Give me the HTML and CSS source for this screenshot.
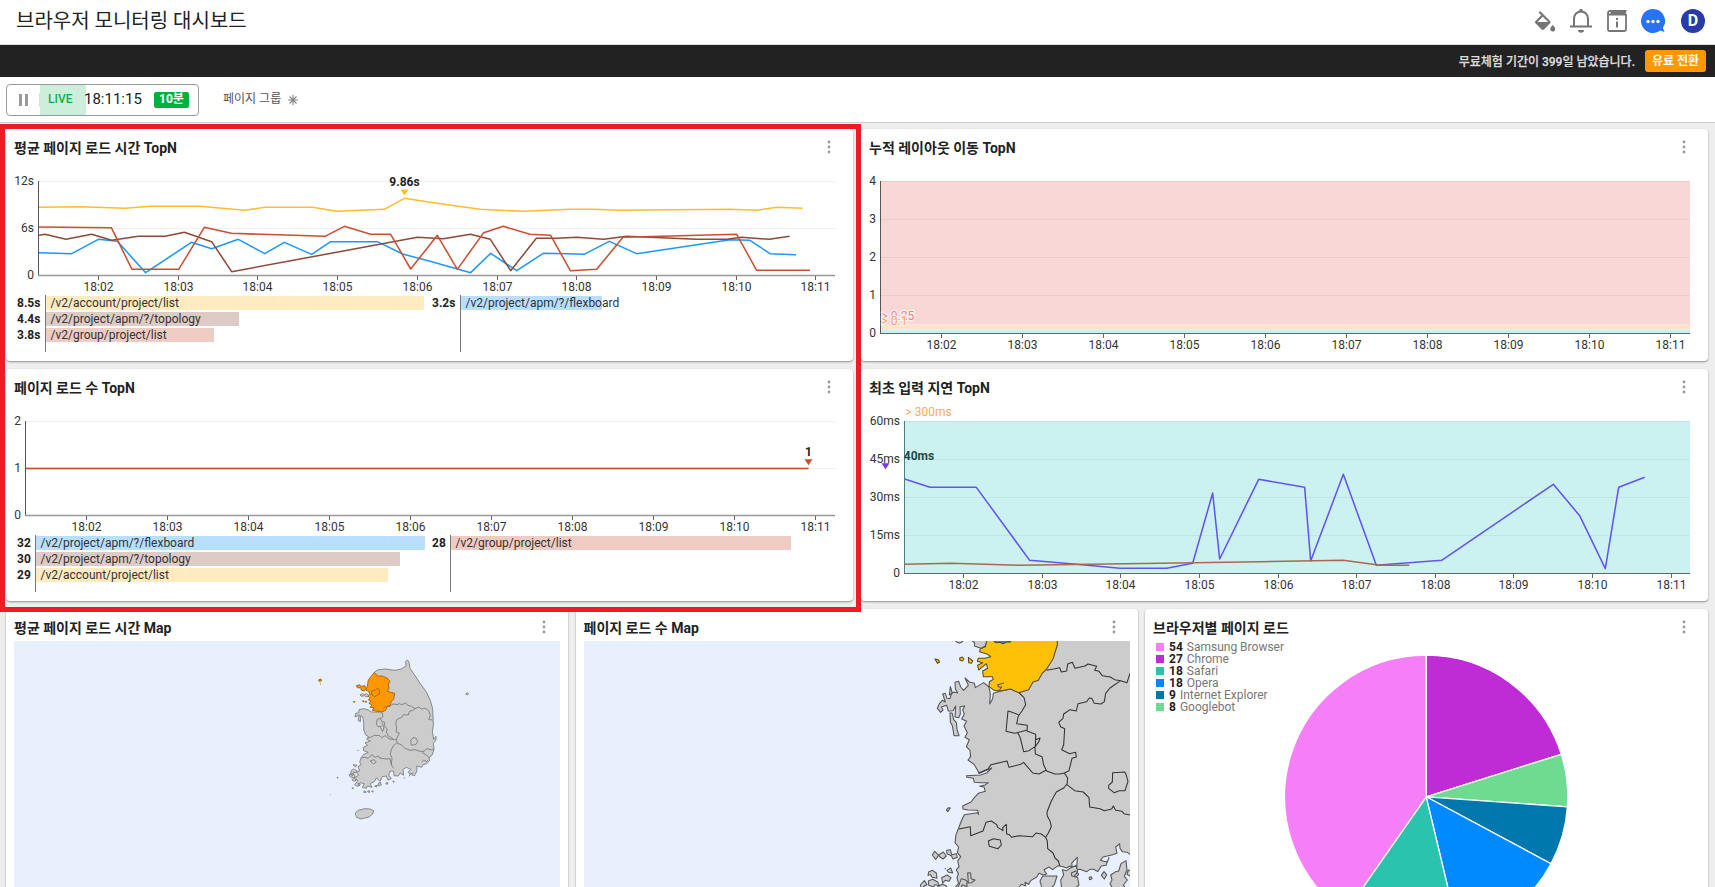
FILE: index.html
```html
<!DOCTYPE html>
<html lang="ko">
<head>
<meta charset="utf-8">
<title>브라우저 모니터링 대시보드</title>
<link rel="stylesheet" href="styles.css">
</head>
<body>
<svg class="defs" width="0" height="0"><symbol id="more" viewBox="0 0 4 14"><g fill="#999"><circle cx="2" cy="2" r="1.400"/><circle cx="2" cy="7" r="1.400"/><circle cx="2" cy="12" r="1.400"/></g></symbol></svg>
<header class="topbar">
  <h1 class="page-title">브라우저 모니터링 대시보드</h1>
  <div class="actions">
    <svg class="ic-fill" width="20" height="24" viewBox="3 -1 18 20" fill="#757575"><path d="M16.560 8.940L7.620 0 6.210 1.410l2.380 2.380-5.150 5.150c-.59.59-.59 1.540 0 2.120l5.500 5.500c.29.29.68.44 1.060.44s.77-.15 1.060-.44l5.500-5.500c.59-.58.59-1.530 0-2.120zM5.210 10L10 5.210 14.790 10H5.210zM19 12.600s-2.300 2.170-2.300 3.600c0 1.200 1 2.200 2.300 2.200s2.300-1 2.300-2.200c0-1.430-2.300-3.600-2.300-3.600z"/></svg>
    <svg class="ic-bell" width="22" height="24" viewBox="0 0 22 24"><path d="M4 17V9.500a7 7 0 0 1 14 0V17M0 17.500h22" fill="none" stroke="#757575" stroke-width="2"/><circle cx="11" cy="1.600" r="1.700" fill="#757575"/><path d="M8 21h6a3 2.800 0 0 1-6 0z" fill="#757575"/></svg>
    <svg class="ic-book" width="20" height="24" viewBox="0 0 20 24" fill="none" stroke="#757575" stroke-width="1.800"><path d="M19.500 2H2.800a1.800 1.800 0 0 0 0 3.600H19V20.500a1.500 1.500 0 0 1-1.500 1.500h-15A1.500 1.500 0 0 1 1 20.500V3.600M3.500 3.800H18v2"/><path d="M10 9v2M10 12.500v6" stroke-width="2"/></svg>
    <svg class="ic-chat" width="24" height="24" viewBox="0 0 24 24"><path d="M12 0a12 12 0 1 0 7.200 21.600L23.500 23l-1.600-4.200A12 12 0 0 0 12 0z" fill="#2872f5"/><g fill="#fff"><circle cx="7" cy="12.500" r="1.700"/><circle cx="12" cy="12.500" r="1.700"/><circle cx="17" cy="12.500" r="1.700"/></g></svg>
    <span class="avatar">D</span>
  </div>
</header>
<div class="trial"><span>무료체험 기간이 399일 남았습니다.</span><button class="upgrade">유료 전환</button></div>
<div class="toolbar">
  <div class="live-box"><i class="pause"></i><i class="sep"></i><span class="live">LIVE</span><span class="clock">18:11:15</span><span class="range">10분</span></div>
  <span class="group-label">페이지 그룹</span>
  <svg class="star" width="10" height="10" viewBox="-5 -5 10 10" stroke="#888" stroke-width="1.200"><path d="M0-5V5M-5 0H5M-3.500-3.500 3.500 3.500M3.500-3.500-3.500 3.500"/></svg>
</div>
<main class="board">
  <div class="row row-wide">
    <section class="card">
      <div class="card-head"><h2>평균 페이지 로드 시간 TopN</h2><svg class="more"><use href="#more"/></svg></div>
      <svg class="chart" width="831" height="134" viewBox="14 161 831 134">
        <path class="grid" d="M39 181.500H835M39 228.500H835"/>
        <path class="axis-y" d="M38.500 181V275"/><path class="axis-x" d="M38 275.500H835"/>
        <path class="tick" d="M98.500 276v4M178.500 276v4M257.500 276v4M337.500 276v4M417.500 276v4M497.500 276v4M576.500 276v4M656.500 276v4M736.500 276v4M815.500 276v4"/>
        <g class="lab end"><text x="34" y="185">12s</text><text x="34" y="232">6s</text><text x="34" y="279">0</text></g>
        <g class="lab mid"><text x="98.500" y="291">18:02</text><text x="178.500" y="291">18:03</text><text x="257.500" y="291">18:04</text><text x="337.500" y="291">18:05</text><text x="417.500" y="291">18:06</text><text x="497.500" y="291">18:07</text><text x="576.500" y="291">18:08</text><text x="656.500" y="291">18:09</text><text x="736.500" y="291">18:10</text><text x="815.500" y="291">18:11</text></g>
        <g class="series" transform="translate(0 120) scale(.33333)">
          <polyline stroke="#1e96ff" points="117,398 215,401 295,358 352,364 437,458 520,403 574,367 635,386 715,358 794,401 853,367 935,403 992,365 1132,365 1208,402 1290,424 1412,458 1472,400 1550,452 1630,400 1700,401 1752,403 1828,364 1910,401 2190,359 2250,361 2310,401 2388,404"/>
          <polyline stroke="#8d4a38" points="117,346 135,343 198,358 275,343 335,361 415,349 495,349 553,337 635,365 695,455 1252,352 1330,356 1411,343 1471,358 1532,452 1609,355 1670,355 1730,352 1811,358 1880,349 2090,358 2180,358 2225,352 2308,358 2369,349"/>
          <polyline stroke="#c94f32" points="117,321 334,323 396,448 536,448 613,322 694,340 975,349 1033,319 1112,343 1172,343 1232,447 1312,346 1372,448 1451,338 1510,319 1590,343 1652,346 1711,452 1790,448 1869,352 2210,343 2270,451 2430,451"/>
          <polyline stroke="#ffbc2e" points="117,262 240,260 376,265 450,259 600,259 734,271 794,262 937,262 1010,274 1153,268 1213,235 1290,247 1440,268 1570,274 1710,268 1780,268 1860,271 2190,268 2270,271 2330,262 2408,265"/>
        </g>
        <path d="M400.500 189.500h8l-4 6z" fill="#ffbc2e"/><text class="peak" x="404.500" y="186">9.86s</text>
      </svg>
      <div class="legend decimals">
        <ul><li><b>8.5s</b><span class="bar yellow" style="width:378px">/v2/account/project/list</span></li><li><b>4.4s</b><span class="bar brown" style="width:193px">/v2/project/apm/?/topology</span></li><li><b>3.8s</b><span class="bar red" style="width:168px">/v2/group/project/list</span></li></ul>
        <ul><li><b>3.2s</b><span class="bar blue" style="width:141px">/v2/project/apm/?/flexboard</span></li></ul>
      </div>
    </section>
    <section class="card">
      <div class="card-head"><h2>누적 레이아웃 이동 TopN</h2><svg class="more"><use href="#more"/></svg></div>
      <svg class="chart" width="831" height="195" viewBox="869 161 831 195">
        <path class="axis-y" d="M880.500 181V333"/>
        <path fill="#f8d7d6" d="M881 181h809v143.500H881z"/><path fill="#ffe3c8" d="M881 324.500h809v5H881z"/><path fill="#c8f1ef" d="M881 329.500h809v4H881z"/>
        <path class="grid-dark" d="M881 181.500h809M881 219.500h809M881 257.500h809M881 295.500h809"/>
        <path class="tick" d="M880 333.500H1690M941.500 334v4M1022.500 334v4M1103.500 334v4M1184.500 334v4M1265.500 334v4M1346.500 334v4M1427.500 334v4M1508.500 334v4M1589.500 334v4M1670.500 334v4"/>
        <g class="lab end"><text x="876" y="185">4</text><text x="876" y="223">3</text><text x="876" y="261">2</text><text x="876" y="299">1</text><text x="876" y="337">0</text></g>
        <g class="lab mid"><text x="941.500" y="348.500">18:02</text><text x="1022.500" y="348.500">18:03</text><text x="1103.500" y="348.500">18:04</text><text x="1184.500" y="348.500">18:05</text><text x="1265.500" y="348.500">18:06</text><text x="1346.500" y="348.500">18:07</text><text x="1427.500" y="348.500">18:08</text><text x="1508.500" y="348.500">18:09</text><text x="1589.500" y="348.500">18:10</text><text x="1670.500" y="348.500">18:11</text></g>
        <text class="halo" x="881.500" y="320" fill="#ef7f7f">&gt; 0.25</text><text class="halo" x="881.500" y="324.500" fill="#ff9f4a">&gt; 0.1</text>
      </svg>
    </section>
    <section class="card">
      <div class="card-head"><h2>페이지 로드 수 TopN</h2><svg class="more"><use href="#more"/></svg></div>
      <svg class="chart" width="831" height="134" viewBox="14 401 831 134">
        <path class="grid" d="M26 421.500H835M26 468.500H835"/>
        <path class="axis-y" d="M25.500 421V515"/><path class="axis-x" d="M25 515.500H835"/>
        <path class="tick" d="M86.500 516v4M167.500 516v4M248.500 516v4M329.500 516v4M410.500 516v4M491.500 516v4M572.500 516v4M653.500 516v4M734.500 516v4M815.500 516v4"/>
        <g class="lab end"><text x="21" y="425">2</text><text x="21" y="472">1</text><text x="21" y="519">0</text></g>
        <g class="lab mid"><text x="86.500" y="531">18:02</text><text x="167.500" y="531">18:03</text><text x="248.500" y="531">18:04</text><text x="329.500" y="531">18:05</text><text x="410.500" y="531">18:06</text><text x="491.500" y="531">18:07</text><text x="572.500" y="531">18:08</text><text x="653.500" y="531">18:09</text><text x="734.500" y="531">18:10</text><text x="815.500" y="531">18:11</text></g>
        <path d="M26 468.500H808.500" stroke="#f3c3a4" stroke-width="3"/><path d="M26 468.500H808.500" stroke="#c9502f" stroke-width="1.200"/>
        <path d="M804.500 459.300h8l-4 6z" fill="#c9502f"/><text class="peak" x="808.500" y="456">1</text>
      </svg>
      <div class="legend">
        <ul><li><b>32</b><span class="bar blue" style="width:389px">/v2/project/apm/?/flexboard</span></li><li><b>30</b><span class="bar brown" style="width:364px">/v2/project/apm/?/topology</span></li><li><b>29</b><span class="bar yellow" style="width:352px">/v2/account/project/list</span></li></ul>
        <ul><li><b>28</b><span class="bar red" style="width:340px">/v2/group/project/list</span></li></ul>
      </div>
    </section>
    <section class="card">
      <div class="card-head"><h2>최초 입력 지연 TopN</h2><svg class="more"><use href="#more"/></svg></div>
      <svg class="chart" width="831" height="195" viewBox="869 401 831 195">
        <path fill="#cbf2f0" d="M904 421h786v152.500H904z"/>
        <path class="grid-dark" d="M905 421.500h785M905 459.500h785M905 497.500h785M905 535.500h785"/>
        <path d="M904.500 421V573" stroke="#4e7f7d"/>
        <path class="tick" d="M904 573.500H1690M963.500 574v4M1042.500 574v4M1120.500 574v4M1199.500 574v4M1278.500 574v4M1356.500 574v4M1435.500 574v4M1513.500 574v4M1592.500 574v4M1671.500 574v4"/>
        <g class="lab end"><text x="900" y="425">60ms</text><text x="900" y="463">45ms</text><text x="900" y="501">30ms</text><text x="900" y="539">15ms</text><text x="900" y="577">0</text></g>
        <g class="lab mid"><text x="963.500" y="588.500">18:02</text><text x="1042.500" y="588.500">18:03</text><text x="1120.500" y="588.500">18:04</text><text x="1199.500" y="588.500">18:05</text><text x="1278.500" y="588.500">18:06</text><text x="1356.500" y="588.500">18:07</text><text x="1435.500" y="588.500">18:08</text><text x="1513.500" y="588.500">18:09</text><text x="1592.500" y="588.500">18:10</text><text x="1671.500" y="588.500">18:11</text></g>
        <g class="series" transform="translate(860 365) scale(.33333)">
          <polyline stroke="#6353f1" points="134,342 210,367 349,367 509,586 650,598 780,610 920,610 998,595 1058,384 1079,582 1196,343 1334,367 1352,588 1450,328 1549,601 1745,586 2080,358 2159,452 2236,611 2276,367 2354,337"/>
          <polyline stroke="#a9694f" points="134,598 275,595 480,601 900,595 1200,590 1450,586 1560,601 1648,601"/>
        </g>
        <path d="M881.500 463.300h8l-4 6z" fill="#7438ff"/><text class="peak teal" x="919" y="459.500">40ms</text><text class="limit" x="905.500" y="416">&gt; 300ms</text>
      </svg>
    </section>
  </div>
  <div class="row row-maps">
    <section class="card">
      <div class="card-head"><h2>평균 페이지 로드 시간 Map</h2><svg class="more"><use href="#more"/></svg></div>
      <svg class="map" width="546" height="260" viewBox="14 641 546 260">
        <g transform="translate(300 640) scale(.33333)" fill="#ccc" stroke="#777" stroke-width="2.500" stroke-linejoin="round">
          <path d="M223,97 232,90 255,87 285,91 304,87 318,78 317,64 322,60 327,66 330,85 343,104 361,131 379,156 391,181 398,206 400,255 397,275 401,298 408,289 408,300 400,310 402,329 396,346 387,353 389,362 380,371 370,374 365,382 350,378 351,392 344,407 334,404 324,397 332,388 319,382 309,388 311,406 300,399 295,408 282,407 281,394 271,393 266,405 274,416 264,420 259,408 247,410 240,424 229,414 223,425 211,431 216,442 202,438 199,445 187,442 193,431 181,428 173,440 164,434 173,423 166,412 176,406 169,396 179,393 174,380 184,374 179,366 184,352 193,342 205,337 191,332 190,322 203,316 195,309 211,303 200,298 206,290 198,286 191,270 191,247 188,230 182,227 181,245 174,241 178,225 165,231 167,220 176,218 177,209 191,206 205,210 215,216 245,216 250,204z"/>
          <path fill="#ff9800" stroke="#965c10" d="M223,97 233,108 246,108 261,114 270,124 265,132 267,145 262,154 284,160 281,178 274,184 270,198 261,201 257,211 245,216 228,213 217,211 222,203 210,202 216,195 207,190 213,183 205,180 211,174 204,169 210,163 205,153 198,151 202,138 205,120z"/>
          <path fill="#ff9800" stroke="#965c10" d="M214,158 218,152 227,150 233,144 238,151 239,162 230,166 224,170 216,165zM169,137l10-3 4 5 12-2 2 9-4 7-10-3 1-6-12-1zM187,183l3-1 1 4zM194,185l5-2v4zM160,184l5 1-2 3zM55,120l8-3 2 5-7 3zM60,132h3"/>
          <path d="M180,165l8-4 5 3 6-3 8 5-6 5-8-4-9 2zM167,518l8-7 19-5 17 1 10 5-3 10-11 9-24 6-13-5-4-9z"/>
          <path fill="none" d="M250,205 257,199 271,198 279,192 295,194 298,189 304,195 316,189 324,196 334,199 345,206 356,201 364,207 376,205 386,212 391,226 386,238 397,240M345,206 337,212 329,213 325,225 310,224 305,232 290,239 287,252 290,262 288,275 298,279 289,298 284,299 268,297 256,287 245,293 239,287 222,286 215,291 203,294M246,217 249,230 242,236 244,243 254,247 254,259 262,267 259,276 265,288 279,296M242,235l-10 3-3 14 5 8 11-1M246,248l6 15-4 11-7-12M289,298 292,310 304,314 315,325 330,331 345,329 360,334 371,334 381,326 395,330 402,326M290,309 280,317 274,329 271,342 276,354 274,375 282,385M184,354 194,352 205,355 215,344 225,352 235,348 239,354 259,357 270,356 274,374M332,302l7-9 10 2 4 10-6 9-13 1zM210,363l11-4 8 6-8 7zM371,333l-4 5 15 9 4 6M365,367l6-7 9 5 4-5"/>
          <path d="M159,374l12 2-5 5zM154,391l7-4 10 5-5 7-5-3-2 10-7-2zM147,404l11-3 8 6-3 7-12-3zM156,419l7-4 6 6-8 3zM174,430l7 2-3 6zM190,456l5-4 3 6zM202,454l7-2-1 6zM215,453h5l-2 4zM224,438l8-2-3 5zM234,432l7-6 3 9-9 3zM257,429l7-1-3 6zM278,424l4-1v4zM172,331h4M111,412h3l-1 3zM91,464h2M156,443l4 1-2 3zM497,162l5-4 4 3-4 4zM311,414h4M341,398l-10 4-4 7"/>
        </g>
      </svg>
    </section>
    <section class="card">
      <div class="card-head"><h2>페이지 로드 수 Map</h2><svg class="more"><use href="#more"/></svg></div>
      <svg class="map" width="546" height="260" viewBox="584 641 546 260">
        <g transform="translate(910 610) scale(.33333)" fill="#ccc" stroke="#555" stroke-width="3.200" stroke-linejoin="round">
          <path d="M330,80H700V850H132L134,834 146,820 141,804 145,791 139,779 147,770 143,753 152,740 142,728 146,711 135,698 138,674 146,654 154,633 163,614 202,608 206,613 203,601 174,600 159,597 158,588 183,576 193,563 205,550 226,544 222,531 209,529 225,525 235,518 213,518 193,517 190,505 171,502 169,497 211,495 230,489 245,474 208,490 192,463 174,450 182,440 180,421 169,410 178,389 165,382 172,368 162,347 170,334 155,327 163,313 158,299 164,288 150,290 151,312 146,323 135,321 137,288 129,302 115,303 110,286 94,291 99,300 92,307 82,295 88,281 97,271 106,276 98,252 106,250 111,265 120,266 126,246 121,230 118,255 132,246 143,249 136,236 135,217 146,214 152,231 161,241 175,226 165,204 178,216 193,220 196,233 221,218 237,231 241,253 239,282 248,266 250,250 271,244 330,230z"/>
          <path fill="#ffc107" stroke="#554b25" d="M232,85 226,110 211,116 209,125 233,133 242,140 225,145 205,145 202,154 218,158 203,166 206,180 229,161 233,175 218,183 220,200 247,200 250,208 238,215 237,230 253,241 267,244 301,237 326,248 356,239 369,216 385,211 396,191 410,177 429,147 442,105V85z"/>
          <path fill="none" d="M255,242 269,240 275,231 266,231 263,224 282,219"/>
          <path fill="#2389dc" stroke="#554b25" d="M250,90 256,98 270,97 279,101 291,95 300,97 304,90z"/>
          <path d="M184,90 194,99 193,108 213,115 225,109 231,90zM134,90q15 18 27 0zM120,308 127,310 131,329 139,337 141,358 147,377 132,377 127,347 121,336zM109,600l6-7 6 1-8 11z"/>
          <path fill="#ffc107" stroke="#554b25" d="M75,147l9 2 5 7-7 4zM149,145l8-4 5 6-5 6-7-2zM175,142l5 4 8 7-4 7-8-2z"/>
          <g fill="none" stroke="#333"><path d="M410,181 431,177 449,173 454,186 470,183 473,162 487,157 495,175 511,171 525,168 534,162 560,169 554,181 567,184 577,197 601,201 614,209 632,212 651,218 660,190M632,212 600,234 587,250 583,275 573,282 553,280 545,265 538,264 530,275 504,281 499,303 480,299 461,312 459,325 446,337 452,350 464,356 461,405 455,419 479,431 497,427 499,441 486,445 477,482 463,489 449,492 435,492 410,483 401,465 396,440 376,432 375,411 387,394 390,384 377,389 377,373 351,363 352,346 320,341 325,318 336,303 347,284 342,263 328,249M325,314 306,307 294,303 288,364 314,370 349,361M323,369 330,381 341,425 357,422 376,409 377,374M205,490 234,477 243,464 291,453 297,472 332,463 341,457 368,489 387,492 408,481M463,489 473,504 471,524 494,542 520,546 537,563 539,591 570,596 583,602 605,597 610,588 617,601 636,604 642,611 661,615M471,522 461,534 439,546 424,573 411,606 412,618 420,633 424,650 415,669 407,682 394,672 378,669 368,680 327,677 305,682 298,674 290,672 289,643 278,653 279,662 264,653 260,644 244,633 228,637 219,663 182,677 181,650 147,657M407,682 412,693 413,716 429,729 435,744 445,753 450,769"/><path fill="#ccc" d="M235,693 250,686 271,690 274,705 264,716 238,709zM608,488 644,486 648,493 654,514 645,542 628,542 612,548 596,535 596,526 607,516z"/></g>
          <path fill="#e8f0fe" d="M680,745 661,734 652,727 637,725 630,715 629,701 617,711 621,730 608,734 579,741 571,751 590,756 596,747 597,743 588,766 574,768 563,785 551,778 540,778 530,785 510,778 500,779 502,742 492,752 485,760 487,771 480,768 470,774 459,770 444,767 428,779 417,771 402,779 410,792 400,795 387,790 380,801 362,812 356,823 345,817 347,828 334,823 321,840H680z"/>
          <path d="M397,837 390,814 398,798 418,798 441,798 433,824 416,841zM456,841 452,810 461,795 457,779 470,782 480,775 499,766 503,786 492,799 503,803 507,825 488,841zM484,789l13-6 9 10-8 9-13-5zM537,803l7-3 2 6-7 3zM582,785 574,796 583,807 590,794zM612,841 600,821 606,810 602,795 617,785 626,783 633,761 648,752 651,780 643,799 652,810 640,825 652,841zM655,780l15 5-6 16-13-8zM67,735 74,724 86,736 77,748zM86,735l14-9 9 12-10 9-9-6zM110,721l11-2 4 15 14-3 3 11-13 5-5-10-13-6zM56,786l11-5 12 8 2 16-15-3-4-8-8 2zM111,781l11-7 6 15-12-2zM31,825l12-13 8 12-10 5 7 8-12 4zM55,813l13-5 15 8 5 11-13-3-5 7-14-5zM145,830l9-24 11 3 10 8-2-29 9 1 1 17 12 4-10 8-15 1 1 11-14-6-7 14zM95,803l16-8 12 8-6 11-11-3-8 8zM83,831l14-9 12 6 6 14-17-5-11 7zM104,776h4"/>
        </g>
      </svg>
    </section>
    <section class="card">
      <div class="card-head"><h2>브라우저별 페이지 로드</h2><svg class="more"><use href="#more"/></svg></div>
      <div class="pie-wrap">
        <ul class="pie-legend"><li><i class="c1"></i><b>54</b>Samsung Browser</li><li><i class="c2"></i><b>27</b>Chrome</li><li><i class="c3"></i><b>18</b>Safari</li><li><i class="c4"></i><b>18</b>Opera</li><li><i class="c5"></i><b>9</b>Internet Explorer</li><li><i class="c6"></i><b>8</b>Googlebot</li></ul>
        <svg class="pie" width="290" height="290" viewBox="1281 652.500 290 290" stroke="#fff" stroke-width="1.300">
          <path fill="#bf2cd6" d="M1426.200 797.300V655.700A141.600 141.600 0 0 1 1561.300 754.800z"/>
          <path fill="#6edb91" d="M1426.200 797.300 1561.300 754.800A141.600 141.600 0 0 1 1567.400 807.300z"/>
          <path fill="#0077ad" d="M1426.200 797.300 1567.400 807.300A141.600 141.600 0 0 1 1551 864.200z"/>
          <path fill="#008afe" d="M1426.200 797.300 1551 864.200A141.600 141.600 0 0 1 1459.100 935z"/>
          <path fill="#2ac4ae" d="M1426.200 797.300 1459.100 935A141.600 141.600 0 0 1 1345.100 913.400z"/>
          <path fill="#f67ff7" d="M1426.200 797.300 1345.100 913.400A141.600 141.600 0 0 1 1426.200 655.700z"/>
        </svg>
      </div>
    </section>
  </div>
</main>
<div class="highlight"></div>
</body>
</html>
```
FILE: styles.css
```css
* { box-sizing: border-box; }
body { margin: 0; width: 1715px; height: 887px; overflow: hidden; position: relative; background: #eee; color: #222; font-family: Roboto, "Noto Sans CJK KR", sans-serif; font-size: 12px; }
h1, h2, ul { margin: 0; padding: 0; list-style: none; }
svg { display: block; flex: none; }
.defs { position: absolute; }
.topbar { height: 45px; padding: 0 10px 2px 16px; display: flex; align-items: center; justify-content: space-between; background: #fff; border-bottom: 1px solid #ddd; }
.page-title { font-size: 20px; font-weight: 400; line-height: 30px; }
.actions { display: flex; align-items: center; }
.ic-fill { margin-right: 15px; }
.ic-bell { margin-right: 15px; }
.ic-book { margin-right: 14px; }
.ic-chat { margin-right: 16px; }
.avatar { width: 24px; height: 24px; border-radius: 50%; background: #283ba8; color: #fff; font-size: 16px; font-weight: 700; line-height: 23px; text-align: center; }
.trial { height: 32px; background: #222; color: #ddd; display: flex; align-items: center; justify-content: flex-end; gap: 10px; padding-right: 9px; font-weight: 500; }
.trial span { padding-bottom: 1px; -webkit-text-stroke: .25px #ddd; }
.upgrade { width: 61px; height: 22px; padding: 0; border: 0; border-radius: 3px; background: #ff9800; color: #fff; font: inherit; font-weight: 700; line-height: 20px; }
.toolbar { height: 46px; display: flex; align-items: center; padding: 1px 6px 0; background: #fff; border-bottom: 1px solid #ccc; }
.live-box { width: 193px; height: 32px; border: 1px solid #999; border-radius: 4px; display: flex; align-items: center; padding-left: 12px; }
.pause { width: 9px; height: 12px; border: solid #999; border-width: 0 3px; margin-right: 11px; }
.sep { width: 1px; height: 14px; background: #ddd; }
.live { width: 46px; height: 30px; background: #cceedb; color: #0db14b; font-weight: 500; line-height: 29px; padding-left: 8px; }
.clock { width: 68px; font-size: 15px; line-height: 28px; margin-left: -2px; padding-bottom: 2px; }
.range { width: 35px; height: 16px; border-radius: 2px; background: #00b140; color: #fff; font-weight: 700; line-height: 15px; text-align: center; margin-left: 2px; }
.group-label { margin-left: 24px; color: #555; line-height: 16px; padding-bottom: 3px; }
.star { margin-left: 7px; }
.board { padding: 6px 7px 0 6px; display: flex; flex-direction: column; gap: 8px; }
.row { display: grid; }
.row-wide { grid-template-columns: 847px 847px; grid-template-rows: 232px 232px; gap: 8px; }
.row-maps { grid-template-columns: 562px 562px 563px; gap: 7.5px; height: 292px; }
.card { background: #fff; border-radius: 4px; padding: 0 8px; box-shadow: 0 1px 2px rgba(0, 0, 0, .4); overflow: hidden; }
.card-head { height: 32px; padding-top: 3px; display: flex; align-items: center; justify-content: space-between; }
h2 { font-size: 14px; font-weight: 700; line-height: 26px; padding-top: 2px; }
.more { width: 4px; height: 14px; margin-right: 14px; }
.chart { overflow: visible; }
.grid { stroke: #f0f0f0; }
.grid-dark { stroke: #000; stroke-opacity: .05; }
.axis-y { stroke: #555; }
.axis-x { stroke: #999; stroke-width: 1.3; }
.tick { stroke: #666; }
.lab { font-size: 12px; fill: #333; }
.end { text-anchor: end; }
.mid { text-anchor: middle; }
.series { fill: none; stroke-width: 4.6; stroke-linejoin: round; }
.peak { font-size: 12px; font-weight: 700; text-anchor: middle; fill: #222; }
.teal { fill: #1c4a48; }
.limit { font-size: 12px; fill: #ffa85c; }
.halo { font-size: 12px; stroke: #fff; stroke-width: 2.5; stroke-opacity: .7; paint-order: stroke; }
.legend { display: grid; grid-template-columns: 415px 415px; }
.legend ul { height: 58px; padding-top: 1px; background: linear-gradient(#777, #777) 21px 0 / 1px 57px no-repeat; }
.decimals ul { background-position-x: 31px; }
.legend li { height: 16px; display: flex; line-height: 14px; white-space: nowrap; }
.legend b { width: 22px; padding-left: 3px; }
.decimals b { width: 32px; }
.bar { height: 14px; padding-left: 4.5px; color: #333; }
.yellow { background: #ffebbf; }
.brown { background: #decbc5; }
.red { background: #efccc3; }
.blue { background: #b8dfff; }
.map { background: #e8f0fe; }
.pie-wrap { display: flex; position: relative; padding: 11px 0 0 128px; }
.pie-legend { position: absolute; left: 3px; top: 0; color: #777; }
.pie-legend li { height: 12px; line-height: 12px; display: flex; align-items: center; }
.pie-legend i { width: 8px; height: 8px; margin-right: 5px; }
.pie-legend b { color: #222; margin-right: 4px; }
.c1 { background: #f67ff7; } .c2 { background: #bf2cd6; } .c3 { background: #2ac4ae; }
.c4 { background: #008afe; } .c5 { background: #0077ad; } .c6 { background: #6edb91; }
.highlight { position: absolute; left: 0; top: 124px; width: 861px; height: 488px; border: 5px solid #ed1c24; pointer-events: none; }
```
